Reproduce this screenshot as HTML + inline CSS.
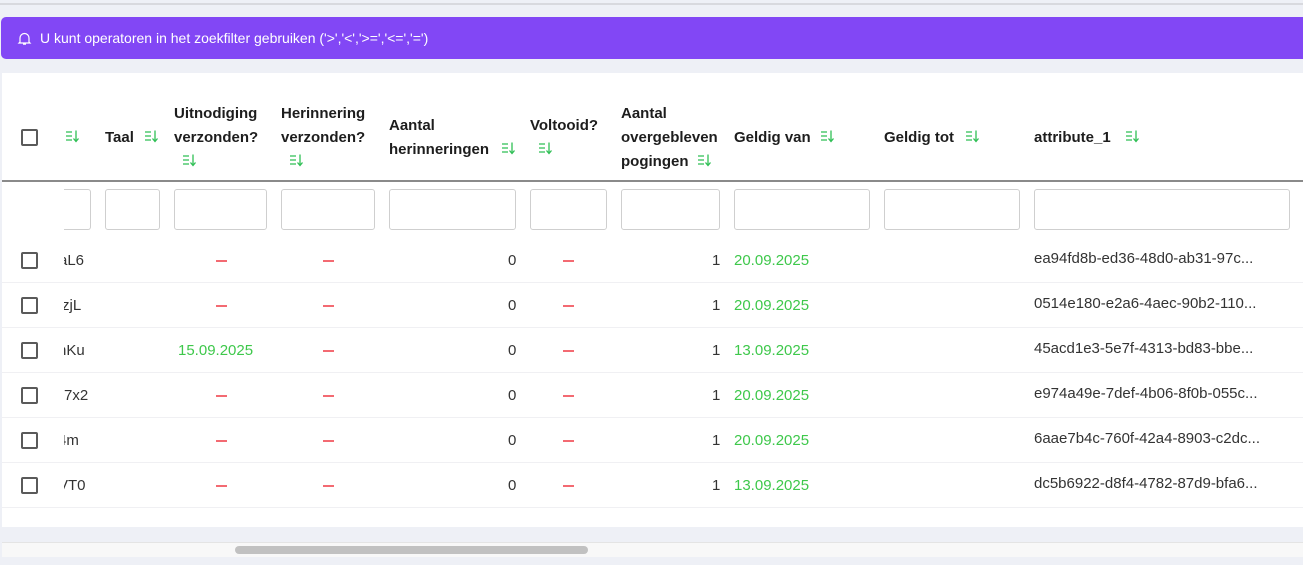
<!DOCTYPE html>
<html><head><meta charset="utf-8"><style>
*{margin:0;padding:0;box-sizing:border-box}
body{width:1303px;height:565px;overflow:hidden;background:#eef0f6;font-family:"Liberation Sans",sans-serif;color:#222;position:relative}
.a{position:absolute;white-space:nowrap}
.h{font-weight:bold;font-size:15px;line-height:24px;color:#1d1d1d}
.cb{position:absolute;width:17px;height:17px;border:2px solid #5a5a5a;border-radius:2px;background:#fff}
.in{position:absolute;top:189px;height:41px;border:1px solid #cfcfcf;border-radius:3px;background:#fff}
.c{font-size:15px;color:#333}
.g{color:#3ec84b}
.d{position:absolute;width:11px;height:1.5px;background:#f36a72}
.sep{position:absolute;left:2px;right:0;height:1px;background:#f0f0f3}
.clip{position:absolute;left:64px;width:30px;height:22px;overflow:hidden}
.clip span{position:absolute;left:-5px;top:0;font-size:15px;color:#333;white-space:nowrap}
</style></head><body>
<div class="a" style="left:0;top:3px;width:1303px;height:2px;background:#d8d9de"></div>
<div class="a" style="left:1px;top:17px;width:1302px;height:42px;background:#8247f5;border-radius:5px 0 0 5px"></div>
<svg class="a" style="left:17px;top:31px" width="15" height="15" viewBox="0 0 15 15"><path d="M3 11V7a4.5 4.5 0 0 1 9 0v4l1 1H2z M6 13.2h3" fill="none" stroke="#fff" stroke-width="1.2"/></svg>
<div class="a" style="left:40px;top:29px;font-size:14px;color:#fff;line-height:18px">U kunt operatoren in het zoekfilter gebruiken ('&gt;','&lt;','&gt;=','&lt;=','=')</div>
<div class="a" style="left:2px;top:73px;width:1301px;height:454px;background:#fff"></div>
<div class="a" style="left:2px;top:180px;width:1301px;height:1.5px;background:#8a8a8a"></div>

<div class="cb" style="left:21px;top:129px"></div>
<svg width="0" height="0" style="position:absolute"><defs><g id="si"><path d="M0 2h6M0 6h6M0 10h6M10 0.5v10.5M7.5 8.5l2.5 3 2.5-3" fill="none" stroke="#2fbf55" stroke-width="1.3"/></g></defs></svg>
<svg class="a" style="left:66px;top:130px" width="13" height="13"><use href="#si"/></svg>
<div class="a h" style="left:105px;top:126px">Taal</div><svg class="a" style="left:145px;top:130px" width="13" height="13"><use href="#si"/></svg>
<div class="a h" style="left:174px;top:102px">Uitnodiging<br>verzonden?</div><svg class="a" style="left:183px;top:154px" width="13" height="13"><use href="#si"/></svg>
<div class="a h" style="left:281px;top:102px">Herinnering<br>verzonden?</div><svg class="a" style="left:290px;top:154px" width="13" height="13"><use href="#si"/></svg>
<div class="a h" style="left:389px;top:114px">Aantal<br>herinneringen</div><svg class="a" style="left:502px;top:142px" width="13" height="13"><use href="#si"/></svg>
<div class="a h" style="left:530px;top:114px">Voltooid?</div><svg class="a" style="left:539px;top:142px" width="13" height="13"><use href="#si"/></svg>
<div class="a h" style="left:621px;top:102px">Aantal<br>overgebleven<br>pogingen</div><svg class="a" style="left:698px;top:154px" width="13" height="13"><use href="#si"/></svg>
<div class="a h" style="left:734px;top:126px">Geldig van</div><svg class="a" style="left:821px;top:130px" width="13" height="13"><use href="#si"/></svg>
<div class="a h" style="left:884px;top:126px">Geldig tot</div><svg class="a" style="left:966px;top:130px" width="13" height="13"><use href="#si"/></svg>
<div class="a h" style="left:1034px;top:126px">attribute_1</div><svg class="a" style="left:1126px;top:130px" width="13" height="13"><use href="#si"/></svg>

<div class="in" style="left:64px;width:27px;border-left:none;border-radius:0 3px 3px 0"></div>
<div class="in" style="left:105px;width:55px"></div>
<div class="in" style="left:174px;width:93px"></div>
<div class="in" style="left:281px;width:94px"></div>
<div class="in" style="left:389px;width:127px"></div>
<div class="in" style="left:530px;width:77px"></div>
<div class="in" style="left:621px;width:99px"></div>
<div class="in" style="left:734px;width:136px"></div>
<div class="in" style="left:884px;width:136px"></div>
<div class="in" style="left:1034px;width:256px"></div>

<div class="sep" style="top:282px"></div><div class="sep" style="top:327px"></div><div class="sep" style="top:372px"></div><div class="sep" style="top:417px"></div><div class="sep" style="top:462px"></div><div class="sep" style="top:507px"></div>

<div class="cb" style="left:21px;top:252px"></div><div class="clip" style="top:252px"><span>aL6</span></div><div class="d" style="left:216px;top:260px"></div><div class="d" style="left:323px;top:260px"></div><div class="a c" style="left:508px;top:252px">0</div><div class="d" style="left:563px;top:260px"></div><div class="a c" style="left:712px;top:252px">1</div><div class="a c g" style="left:734px;top:252px">20.09.2025</div><div class="a c" style="left:1034px;top:250px">ea94fd8b-ed36-48d0-ab31-97c...</div>

<div class="cb" style="left:21px;top:297px"></div><div class="clip" style="top:297px"><span style="left:-2px">zjL</span></div><div class="d" style="left:216px;top:305px"></div><div class="d" style="left:323px;top:305px"></div><div class="a c" style="left:508px;top:297px">0</div><div class="d" style="left:563px;top:305px"></div><div class="a c" style="left:712px;top:297px">1</div><div class="a c g" style="left:734px;top:297px">20.09.2025</div><div class="a c" style="left:1034px;top:295px">0514e180-e2a6-4aec-90b2-110...</div>

<div class="cb" style="left:21px;top:342px"></div><div class="clip" style="top:342px"><span style="left:-6px">nKu</span></div><div class="a c g" style="left:178px;top:342px">15.09.2025</div><div class="d" style="left:323px;top:350px"></div><div class="a c" style="left:508px;top:342px">0</div><div class="d" style="left:563px;top:350px"></div><div class="a c" style="left:712px;top:342px">1</div><div class="a c g" style="left:734px;top:342px">13.09.2025</div><div class="a c" style="left:1034px;top:340px">45acd1e3-5e7f-4313-bd83-bbe...</div>

<div class="cb" style="left:21px;top:387px"></div><div class="clip" style="top:387px"><span style="left:0">7x2</span></div><div class="d" style="left:216px;top:395px"></div><div class="d" style="left:323px;top:395px"></div><div class="a c" style="left:508px;top:387px">0</div><div class="d" style="left:563px;top:395px"></div><div class="a c" style="left:712px;top:387px">1</div><div class="a c g" style="left:734px;top:387px">20.09.2025</div><div class="a c" style="left:1034px;top:385px">e974a49e-7def-4b06-8f0b-055c...</div>

<div class="cb" style="left:21px;top:432px"></div><div class="clip" style="top:432px"><span style="left:-6px">4m</span></div><div class="d" style="left:216px;top:440px"></div><div class="d" style="left:323px;top:440px"></div><div class="a c" style="left:508px;top:432px">0</div><div class="d" style="left:563px;top:440px"></div><div class="a c" style="left:712px;top:432px">1</div><div class="a c g" style="left:734px;top:432px">20.09.2025</div><div class="a c" style="left:1034px;top:430px">6aae7b4c-760f-42a4-8903-c2dc...</div>

<div class="cb" style="left:21px;top:477px"></div><div class="clip" style="top:477px"><span style="left:-6px">VT0</span></div><div class="d" style="left:216px;top:485px"></div><div class="d" style="left:323px;top:485px"></div><div class="a c" style="left:508px;top:477px">0</div><div class="d" style="left:563px;top:485px"></div><div class="a c" style="left:712px;top:477px">1</div><div class="a c g" style="left:734px;top:477px">13.09.2025</div><div class="a c" style="left:1034px;top:475px">dc5b6922-d8f4-4782-87d9-bfa6...</div>

<div class="a" style="left:2px;top:542px;width:1301px;height:15px;background:#f8f8f8;border-top:1px solid #e4e4e4"></div>
<div class="a" style="left:235px;top:546px;width:353px;height:8px;background:#c1c1c1;border-radius:4px"></div>
</body></html>
